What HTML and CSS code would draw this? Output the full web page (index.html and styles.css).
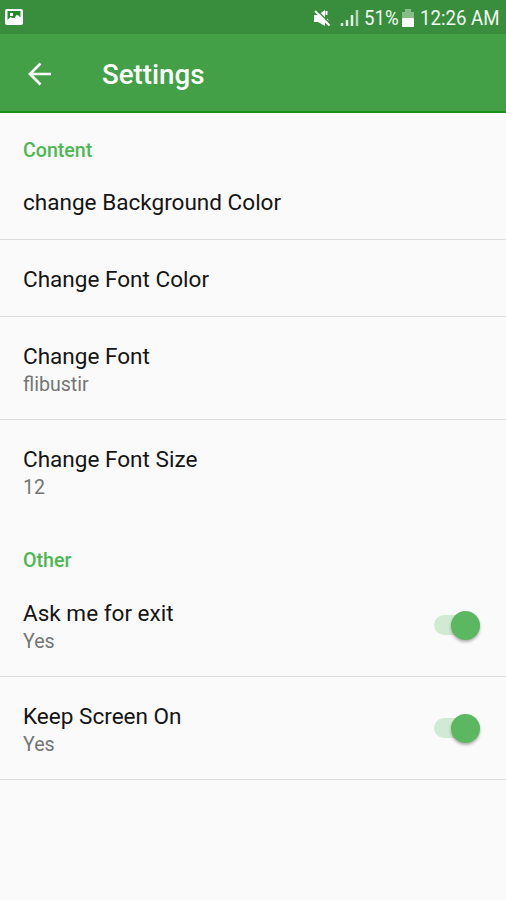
FILE: index.html
```html
<!DOCTYPE html>
<html lang="en">
<head>
<meta charset="utf-8">
<title>Settings</title>
<link rel="stylesheet" href="styles.css">
</head>
<body>
<div class="status">
  <svg class="picture" width="18" height="18" viewBox="0 0 18 18"><rect x="0" y="1" width="18" height="16" rx="2" fill="#fff"/><path d="M2.500 3H15.500V9.500L13.500 7.500L11.500 7L9.500 10H7.500L5.500 9L2.500 12Z" fill="#288a2c"/><rect x="5" y="5" width="3" height="3" fill="#fff"/></svg>
  <div class="indicators">
    <svg class="mute" width="18" height="18" viewBox="0 0 18 18"><path d="M1 6H5L12 1V17L5 13H1Z" fill="#fff"/><path d="M13.500 2V6M14 10L15 13" stroke="#fff" stroke-width="2" fill="none"/><path d="M3.500 1L18 15" stroke="#388e3c" stroke-width="1.500"/><path d="M2 2L16.500 16.500" stroke="#fff" stroke-width="2"/></svg>
    <svg class="signal" width="19" height="18" viewBox="0 0 19 18"><path d="M2 14V17M7 11V17M12 6V17" stroke="#e3f1e4" stroke-width="2.500"/><path d="M17 1V17" stroke="#b5d7b7" stroke-width="2.500"/></svg>
    <span class="percent">51%</span>
    <svg class="battery" width="12" height="18" viewBox="0 0 12 18"><path d="M0 3H3V0H9V3H12V9H0Z" fill="#88bc8b"/><rect y="9" width="12" height="9" rx="1" fill="#fff"/></svg>
    <span class="clock">12:26 AM</span>
  </div>
</div>
<header class="toolbar">
  <svg width="24" height="24" viewBox="0 0 24 24"><path d="M23 12H2.500M12.500 1.500L2 12L12.500 22.500" fill="none" stroke="#fff" stroke-width="2.700"/></svg>
  <h1>Settings</h1>
</header>
<main>
  <h2 class="category first">Content</h2>
  <div class="row"><div class="title">change Background Color</div></div>
  <div class="row"><div class="title">Change Font Color</div></div>
  <div class="row double"><div><div class="title">Change Font</div><div class="summary">flibustir</div></div></div>
  <div class="row double last"><div><div class="title">Change Font Size</div><div class="summary">12</div></div></div>
  <h2 class="category">Other</h2>
  <div class="row double"><div><div class="title">Ask me for exit</div><div class="summary">Yes</div></div><div class="switch"><span class="thumb"></span></div></div>
  <div class="row double"><div><div class="title">Keep Screen On</div><div class="summary">Yes</div></div><div class="switch"><span class="thumb"></span></div></div>
</main>
</body>
</html>
```
FILE: styles.css
```css
* { box-sizing: border-box; }
body { margin: 0; height: 900px; background: #fafafa; font-family: Roboto, sans-serif; overflow: hidden; }
svg { display: block; flex: none; }
.status { height: 34px; background: #388e3c; display: flex; justify-content: space-between; padding: 0 7px 0 5px; }
.picture { margin-top: 8px; }
.indicators { display: flex; align-items: center; height: 36px; color: #f2f9f2; font-size: 20.500px; line-height: 36px; white-space: nowrap; }
.mute { margin-right: 9px; }
.signal { margin-right: 5px; }
.percent, .clock { transform: scaleX(.91); transform-origin: left; }
.percent { width: 34px; }
.battery { margin: 0 6px 0 4px; }
.clock { width: 79px; }
.toolbar { height: 79px; background: #43a047; border-bottom: 2px solid #1b8e20; display: flex; align-items: center; padding: 2px 0 0 28px; }
.toolbar h1 { margin: 0 0 0 50px; padding-top: 3px; color: #fff; font-size: 27.700px; font-weight: 500; line-height: 32px; }
.category { margin: 0; height: 51px; padding: 25px 23px 0; color: #4db752; font-size: 19.600px; font-weight: 500; line-height: 25px; }
.category.first { height: 50px; }
.row { height: 77px; padding: 25px 26px 0 23px; border-bottom: 1px solid #dcdcdc; display: flex; justify-content: space-between; align-items: flex-start; }
.double { height: 103px; }
.last { border-bottom-color: transparent; }
.title { color: #151515; font-size: 22.550px; line-height: 29px; white-space: nowrap; }
.summary { color: #757575; font-size: 19.600px; line-height: 28px; }
.switch { width: 46px; height: 20px; margin-top: 16px; border-radius: 10px; background: #d1ead2; display: flex; justify-content: flex-end; align-items: center; }
.thumb { width: 29px; height: 29px; border-radius: 50%; background: #5cb860; box-shadow: 0 2px 3px rgba(0,0,0,.3); }
```
